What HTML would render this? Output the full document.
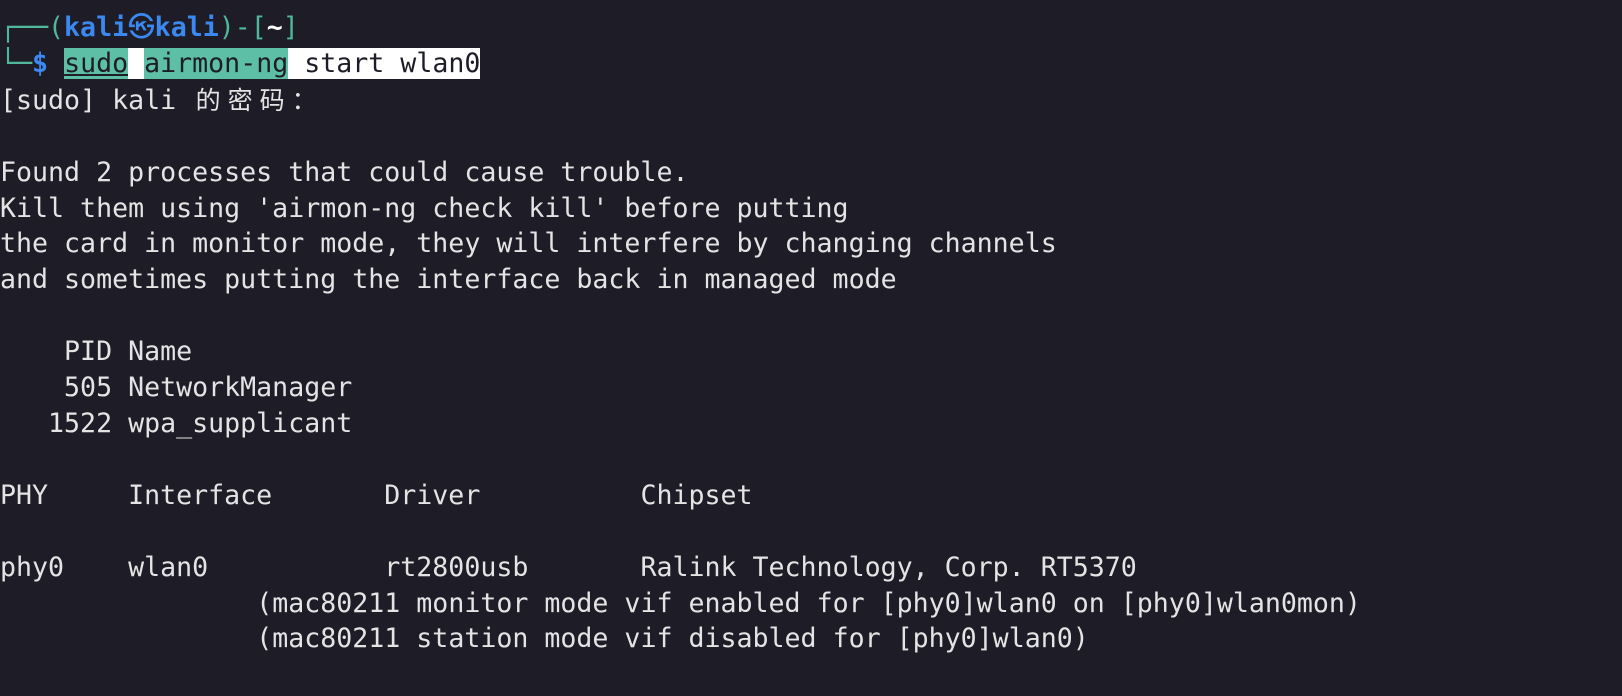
<!DOCTYPE html>
<html><head><meta charset="utf-8"><style>
html,body{margin:0;padding:0;background:#1e1d27;width:1622px;height:696px;overflow:hidden}
pre{margin:0;position:absolute;left:0;top:10px;font-family:"DejaVu Sans Mono","Liberation Mono","Noto Sans CJK SC",monospace;font-size:26.6px;line-height:35.9px;color:#e4e4e4;white-space:pre;tab-size:8}
.t{color:#4fb89c}.b{color:#3a88f0;font-weight:bold}.w{color:#ffffff;font-weight:bold}
.hl{background:#5ebfa7;color:#1e1d27}.hw{background:#ffffff;color:#1e1d27}
.u{text-decoration:underline}
.cjk{font-family:"Noto Sans CJK SC",sans-serif;display:inline-block;width:32px;text-align:center;font-size:25px}
</style></head><body><pre><span class="t">┌──(</span><span class="b">kali㉿kali</span><span class="t">)-[</span><span class="w">~</span><span class="t">]</span>
<span class="t">└─</span><span class="b">$</span> <span class="hl u">sudo</span><span class="hw"> </span><span class="hl">airmon-ng</span><span class="hw"> start wlan0</span>
[sudo] kali <span class="cjk">的</span><span class="cjk">密</span><span class="cjk">码</span><span class="cjk">：</span>

Found 2 processes that could cause trouble.
Kill them using 'airmon-ng check kill' before putting
the card in monitor mode, they will interfere by changing channels
and sometimes putting the interface back in managed mode

    PID Name
    505 NetworkManager
   1522 wpa_supplicant

PHY	Interface	Driver		Chipset

phy0	wlan0		rt2800usb	Ralink Technology, Corp. RT5370
		(mac80211 monitor mode vif enabled for [phy0]wlan0 on [phy0]wlan0mon)
		(mac80211 station mode vif disabled for [phy0]wlan0)
</pre></body></html>
